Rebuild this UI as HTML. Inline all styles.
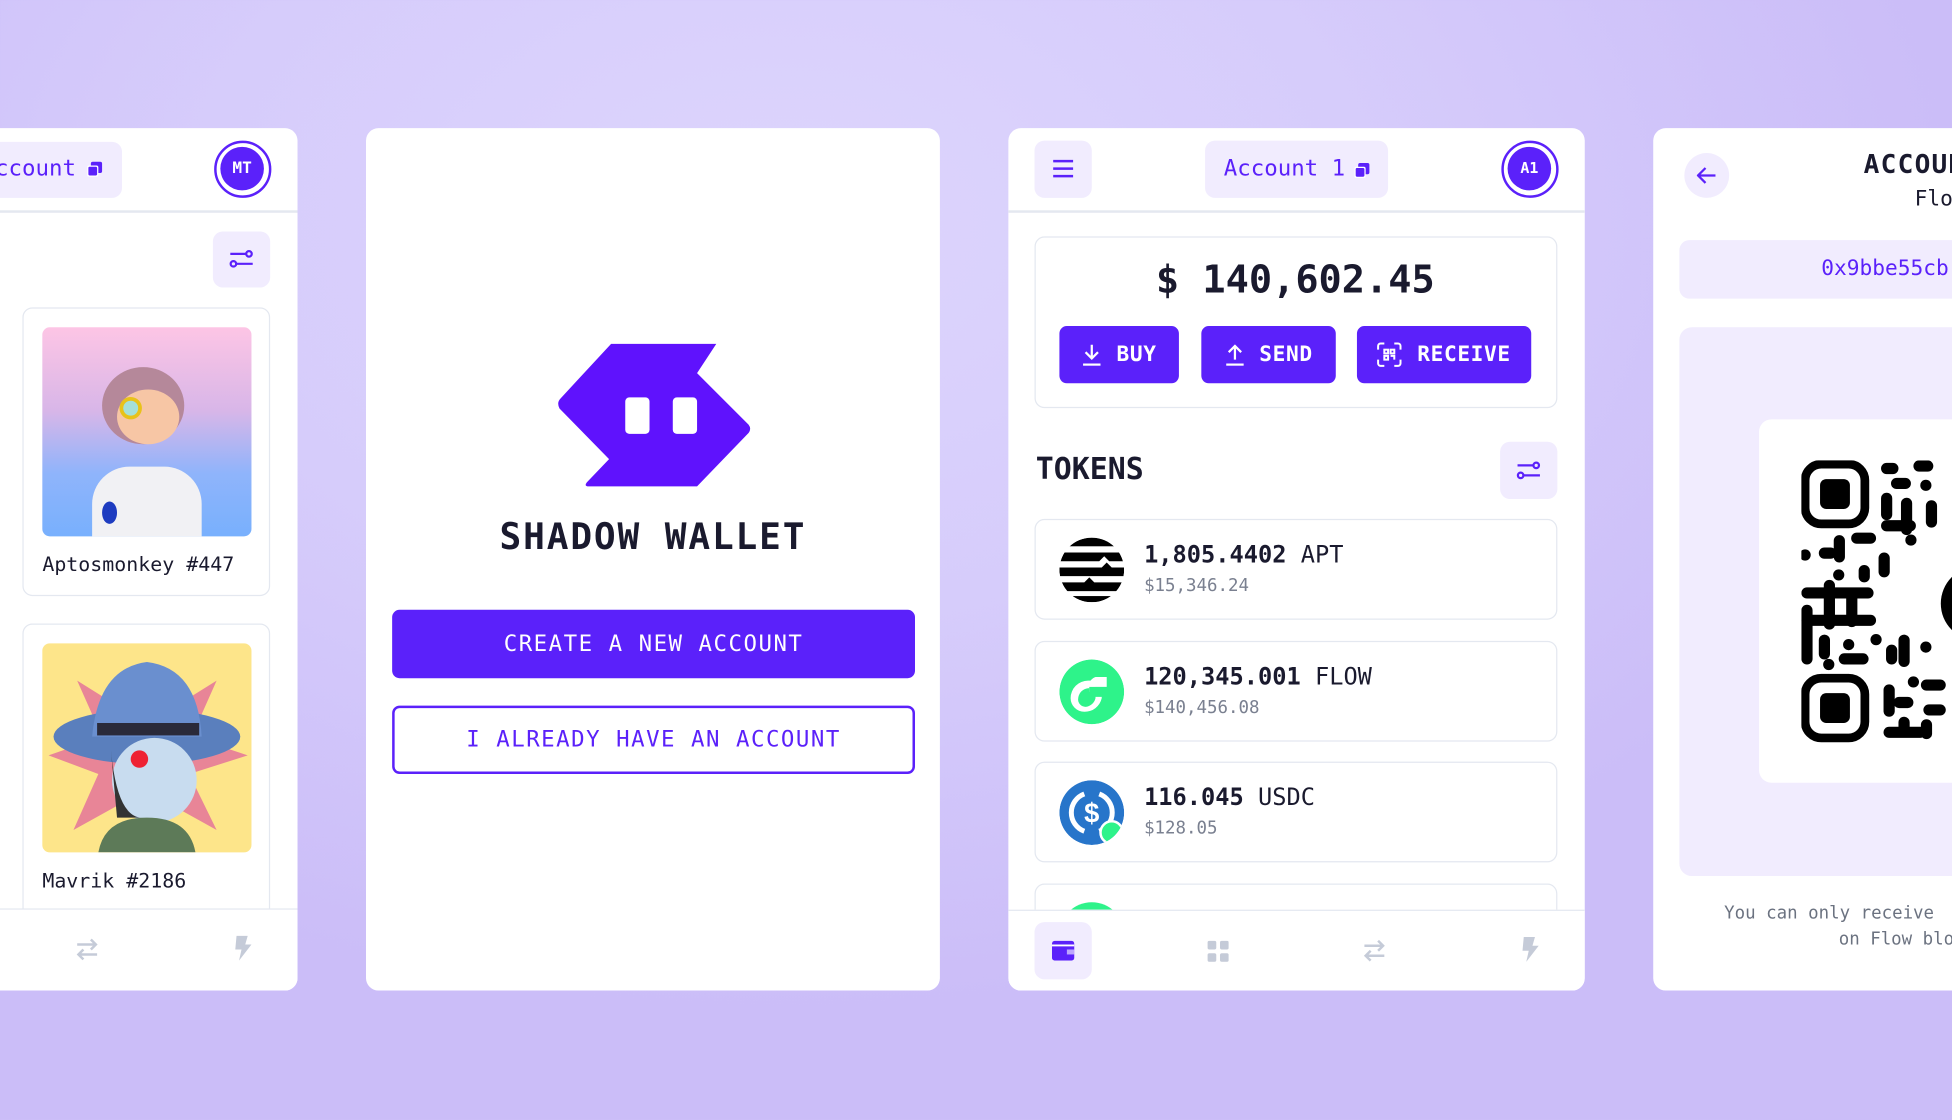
<!DOCTYPE html>
<html><head><meta charset="utf-8"><style>
*{box-sizing:border-box;margin:0;padding:0}
html,body{width:1952px;height:1120px;overflow:hidden}
body{background:radial-gradient(ellipse 60% 70% at 40% 20%,#ddd5fd 0%,#d6ccfb 50%,#cbbdf8 100%);font-family:"DejaVu Sans Mono","Liberation Mono",monospace}
#w{position:absolute;left:0;top:0;width:1568px;height:900px;transform:scale(1.2449,1.2444);transform-origin:0 0}
.ab{position:absolute}
.panel{position:absolute;background:#fff;border-radius:10px;overflow:hidden}
.pill{position:absolute;background:#f1ecfe;border-radius:8px}
.pur{color:#5b21fa}
.av{position:absolute;width:46px;height:46px;border-radius:50%;border:2.5px solid #5b21fa;background:#fff}
.av div{position:absolute;left:3px;top:3px;width:35px;height:35px;border-radius:50%;background:#5b21fa;color:#fff;font-size:13px;font-weight:bold;text-align:center;line-height:35px}
.hl{position:absolute;left:0;right:0;height:1.5px;background:#e4e8f0}
.card{position:absolute;border:1.5px solid #e4e8f0;border-radius:8px;background:#fff}
.btn{position:absolute;background:#5b21fa;border-radius:6px;color:#fff;font-weight:bold;font-size:17px;letter-spacing:0.5px;display:flex;align-items:center;justify-content:center;gap:12px}
.tok .a{position:absolute;left:87px;top:17px;font-size:19px;color:#1a1a2e}
.tok .u{position:absolute;left:87px;top:45px;font-size:14px;color:#7a8090}
.ic{position:absolute;left:19px;top:14px;width:52px;height:52px;border-radius:50%}
</style></head><body><div id="w">

<!-- Panel 1 -->
<div class="panel" style="left:-20px;top:103px;width:259px;height:693px">
 <div class="pill" style="left:0;top:11px;width:118px;height:45px"><span class="pur ab" style="left:16px;top:11px;font-size:18px">ccount</span>
 <svg class="ab" style="left:89px;top:15px" width="14" height="14" viewBox="0 0 14 14"><rect x="4" y="1" width="9" height="9" rx="1.5" fill="#5b21fa"/><rect x="1" y="4" width="9" height="9" rx="1.5" fill="#fff"/><rect x="2" y="5" width="7" height="7" rx="1" fill="#5b21fa"/></svg></div>
 <div class="av" style="left:192px;top:10px"><div>MT</div></div>
 <div class="hl" style="top:66px"></div>
 <div class="pill" style="left:191px;top:83px;width:46px;height:45px"><svg class="ab" style="left:13px;top:14px" width="20" height="16" viewBox="0 0 20 16" fill="none" stroke="#5b21fa" stroke-width="1.8"><path d="M1 4h13M6 12h13"/><circle cx="16" cy="4" r="2.2"/><circle cx="3.5" cy="12" r="2.2"/></svg></div>
 <div class="card" style="left:38px;top:144px;width:199px;height:232px">
  <div class="ab" style="left:15px;top:15px;width:168px;height:168px;border-radius:6px;overflow:hidden;background:linear-gradient(#fdc5e5,#d8b6e8 40%,#8fb4fb 70%,#78b0fd)">
   <div class="ab" style="left:48px;top:32px;width:66px;height:62px;border-radius:50%;background:#b5889a"></div>
   <div class="ab" style="left:60px;top:50px;width:50px;height:44px;border-radius:50%;background:#f7c6a5"></div>
   <div class="ab" style="left:62px;top:56px;width:18px;height:18px;border-radius:50%;border:3px solid #e8c21a;background:#a5e0d8"></div>
   <div class="ab" style="left:40px;top:112px;width:88px;height:70px;border-radius:30px 30px 0 0;background:#f1f1f4"></div>
   <div class="ab" style="left:48px;top:140px;width:12px;height:18px;border-radius:50%;background:#1e3cc0"></div>
  </div>
  <div class="ab" style="left:15px;top:196px;font-size:16px;color:#1a1a2e">Aptosmonkey #447</div>
 </div>
 <div class="card" style="left:38px;top:398px;width:199px;height:240px">
  <div class="ab" style="left:15px;top:15px;width:168px;height:168px;border-radius:6px;overflow:hidden;background:#fde58a">
   <svg class="ab" style="left:0;top:0" width="168" height="168" viewBox="0 0 168 168"><polygon points="84,20 100,55 140,30 120,75 165,90 118,105 140,150 95,125 84,168 70,125 25,150 45,105 5,90 48,75 28,30 68,55" fill="#e88597"/><ellipse cx="84" cy="75" rx="75" ry="22" fill="#5a7fbd"/><path d="M40 75 Q45 20 84 15 Q125 20 128 75Z" fill="#6a8fcf"/><rect x="44" y="64" width="82" height="10" fill="#2a2a3a"/><ellipse cx="90" cy="110" rx="34" ry="34" fill="#c8dcef"/><path d="M55 85 Q60 140 80 140 L60 140Z" fill="#333"/><circle cx="78" cy="93" r="7" fill="#e23"/><path d="M45 168 Q50 140 84 140 Q118 140 123 168Z" fill="#5d7a58"/></svg>
  </div>
  <div class="ab" style="left:15px;top:196px;font-size:16px;color:#1a1a2e">Mavrik #2186</div>
 </div>
 <div class="hl" style="top:627px"></div>
 <div class="ab" style="left:0;top:628px;width:259px;height:65px;background:#fff"></div>
 <svg class="ab" style="left:80px;top:651px" width="20" height="18" viewBox="0 0 20 18" fill="none" stroke="#c5cbd8" stroke-width="2"><path d="M2 5h15M13 1l4 4-4 4M18 13H3M7 9l-4 4 4 4"/></svg>
 <svg class="ab" style="left:207px;top:649px" width="16" height="20" viewBox="0 0 16 20"><path d="M3 0h9l-2 7h5L5 20l2-9H2z" fill="#c5cbd8"/></svg>
</div>

<!-- Panel 2 -->
<div class="panel" style="left:294px;top:103px;width:461px;height:693px">
 <svg class="ab" style="left:153px;top:173px" width="156" height="116" viewBox="18 14 192 142"><path d="M72 14H176L157 43L208 94Q211 98 208 102L157 155H50Q45 155 48 151L70 128L21 78Q18 72 22 68Z" fill="#5f12fd"/><rect x="86" y="67" width="24" height="36" rx="4" fill="#fff"/><rect x="133" y="67" width="24" height="36" rx="4" fill="#fff"/></svg>
 <div class="ab" style="left:0;width:461px;top:311px;text-align:center;font-size:29px;font-weight:bold;letter-spacing:1.5px;color:#1a1a2e">SHADOW WALLET</div>
 <div class="btn" style="left:21px;top:387px;width:420px;height:55px;letter-spacing:1.2px;font-size:18px;font-weight:normal">CREATE A NEW ACCOUNT</div>
 <div class="ab pur" style="left:21px;top:464px;width:420px;height:55px;border:2px solid #5b21fa;border-radius:6px;display:flex;align-items:center;justify-content:center;font-size:18px;letter-spacing:1.2px">I ALREADY HAVE AN ACCOUNT</div>
</div>

<!-- Panel 3 -->
<div class="panel" style="left:810px;top:103px;width:463px;height:693px">
 <div class="pill" style="left:21px;top:10px;width:46px;height:46px"><svg class="ab" style="left:14px;top:15px" width="18" height="15" viewBox="0 0 18 15" stroke="#5b21fa" stroke-width="2"><path d="M1 1.5h16M1 7.5h16M1 13.5h16"/></svg></div>
 <div class="pill" style="left:158px;top:10px;width:147px;height:46px"><span class="pur ab" style="left:15px;top:12px;font-size:18px">Account 1</span>
 <svg class="ab" style="left:119px;top:17px" width="14" height="14" viewBox="0 0 14 14"><rect x="4" y="1" width="9" height="9" rx="1.5" fill="#5b21fa"/><rect x="1" y="4" width="9" height="9" rx="1.5" fill="#fff"/><rect x="2" y="5" width="7" height="7" rx="1" fill="#5b21fa"/></svg></div>
 <div class="av" style="left:396px;top:10px"><div style="font-size:12px">A1</div></div>
 <div class="hl" style="top:66px"></div>
 <div class="card" style="left:21px;top:87px;width:420px;height:138px">
  <div class="ab" style="left:0;width:417px;top:16px;text-align:center;font-size:31px;font-weight:bold;color:#1a1a2e;letter-spacing:0">$ 140,602.45</div>
  <div class="btn" style="left:19px;top:71px;width:96px;height:46px"><svg width="16" height="18" viewBox="0 0 16 18" fill="none" stroke="#fff" stroke-width="1.8"><path d="M8 1v11M3 7l5 5 5-5M1 17h14"/></svg>BUY</div>
  <div class="btn" style="left:133px;top:71px;width:108px;height:46px"><svg width="16" height="18" viewBox="0 0 16 18" fill="none" stroke="#fff" stroke-width="1.8"><path d="M8 13V2M3 7l5-5 5 5M1 17h14"/></svg>SEND</div>
  <div class="btn" style="left:258px;top:71px;width:140px;height:46px"><svg width="20" height="20" viewBox="0 0 20 20" fill="none" stroke="#fff" stroke-width="1.6"><path d="M1 6V3a2 2 0 012-2h3M14 1h3a2 2 0 012 2v3M19 14v3a2 2 0 01-2 2h-3M6 19H3a2 2 0 01-2-2v-3"/><rect x="6" y="6" width="3" height="3"/><rect x="11" y="6" width="3" height="3"/><rect x="6" y="11" width="3" height="3"/><path d="M11 11h3v3"/></svg>RECEIVE</div>
 </div>
 <div class="ab" style="left:22px;top:260px;font-size:24px;font-weight:bold;color:#1a1a2e;letter-spacing:0">TOKENS</div>
 <div class="pill" style="left:395px;top:252px;width:46px;height:46px"><svg class="ab" style="left:13px;top:15px" width="20" height="16" viewBox="0 0 20 16" fill="none" stroke="#5b21fa" stroke-width="1.8"><path d="M1 4h13M6 12h13"/><circle cx="16" cy="4" r="2.2"/><circle cx="3.5" cy="12" r="2.2"/></svg></div>
 <div class="card tok" style="left:21px;top:314px;width:420px;height:81px">
  <svg class="ic" viewBox="0 0 52 52"><defs><clipPath id="c1"><circle cx="26" cy="26" r="26"/></clipPath></defs><g clip-path="url(#c1)" fill="#000"><rect x="0" y="0" width="52" height="7"/><path d="M0 12h52v7H40l-4-4-4 4H0z"/><path d="M0 24h34l4-4 4 4h10v7H0z"/><path d="M0 36h20l4-4 4 4h24v7H0z"/><rect x="0" y="47" width="52" height="5"/></g></svg>
  <div class="a"><b>1,805.4402</b> APT</div><div class="u">$15,346.24</div></div>
 <div class="card tok" style="left:21px;top:412px;width:420px;height:81px">
  <svg class="ic" viewBox="0 0 52 52"><circle cx="26" cy="26" r="26" fill="#2ef38a"/><path d="M29 14h9v8h-9v4h-5v-3a9 9 0 00-9 9 6 6 0 006 6 9 9 0 008-7v-1h5v1a14 14 0 01-14 11 11 11 0 01-11-11 14 14 0 0114-14h2a8 8 0 014-3z" fill="#fff"/><rect x="24" y="22" width="5" height="7" fill="#2ef38a"/><circle cx="21" cy="32" r="2.5" fill="#2ef38a"/></svg>
  <div class="a"><b>120,345.001</b> FLOW</div><div class="u">$140,456.08</div></div>
 <div class="card tok" style="left:21px;top:509px;width:420px;height:81px">
  <svg class="ic" viewBox="0 0 52 52"><circle cx="26" cy="26" r="26" fill="#2775ca"/><path d="M20 11a16 16 0 000 30M32 11a16 16 0 010 30" stroke="#fff" stroke-width="4" fill="none"/><text x="26" y="34" text-anchor="middle" font-size="22" font-weight="bold" fill="#fff" font-family="Liberation Sans">$</text><circle cx="42" cy="42" r="9" fill="#2ef38a" stroke="#fff" stroke-width="2"/></svg>
  <div class="a"><b>116.045</b> USDC</div><div class="u">$128.05</div></div>
 <div class="card" style="left:21px;top:607px;width:420px;height:81px"><div class="ab" style="left:19px;top:14px;width:52px;height:52px;border-radius:50%;background:#2ef38a"></div></div>
 <div class="ab" style="left:0;top:628px;width:463px;height:65px;background:#fff;border-top:1.5px solid #e4e8f0"></div>
 <div class="pill" style="left:21px;top:638px;width:46px;height:46px"><svg class="ab" style="left:14px;top:15px" width="18" height="16" viewBox="0 0 18 16"><rect x="0" y="0" width="18" height="16" rx="2.5" fill="#5b21fa"/><rect x="0" y="3" width="18" height="1.5" fill="#fff"/><rect x="12" y="7" width="6" height="4" fill="#fff" opacity=".6"/></svg></div>
 <svg class="ab" style="left:160px;top:653px" width="17" height="17" viewBox="0 0 17 17" fill="#c5cbd8"><rect x="0" y="0" width="7" height="7" rx="1.5"/><rect x="10" y="0" width="7" height="7" rx="1.5"/><rect x="0" y="10" width="7" height="7" rx="1.5"/><rect x="10" y="10" width="7" height="7" rx="1.5"/></svg>
 <svg class="ab" style="left:284px;top:652px" width="20" height="18" viewBox="0 0 20 18" fill="none" stroke="#c5cbd8" stroke-width="2"><path d="M2 5h15M13 1l4 4-4 4M18 13H3M7 9l-4 4 4 4"/></svg>
 <svg class="ab" style="left:411px;top:650px" width="16" height="20" viewBox="0 0 16 20"><path d="M3 0h9l-2 7h5L5 20l2-9H2z" fill="#c5cbd8"/></svg>
</div>

<!-- Panel 4 -->
<div class="panel" style="left:1328px;top:103px;width:280px;height:693px">
 <div class="ab" style="left:25px;top:20px;width:36px;height:36px;border-radius:50%;background:#f1ecfe"><svg class="ab" style="left:10px;top:11px" width="16" height="14" viewBox="0 0 16 14" fill="none" stroke="#5b21fa" stroke-width="1.8"><path d="M15 7H2M7 1L1 7l6 6"/></svg></div>
 <div class="ab" style="left:169px;top:17px;font-size:21px;font-weight:bold;color:#1a1a2e;letter-spacing:1px">ACCOUNT</div>
 <div class="ab" style="left:210px;top:47px;font-size:17px;color:#1a1a2e">Flow</div>
 <div class="pill" style="left:21px;top:90px;width:300px;height:47px"><span class="pur ab" style="left:114px;top:13px;font-size:17px">0x9bbe55cb</span></div>
 <div class="ab" style="left:21px;top:160px;width:300px;height:441px;background:#f1ecfe;border-radius:10px">
  <div class="ab" style="left:64px;top:74px;width:260px;height:292px;background:#fff;border-radius:10px">
   <svg class="ab" style="left:34px;top:33px" width="200" height="228" viewBox="0 0 200 228" fill="#000">
    <rect x="3" y="3" width="48" height="48" rx="13" fill="none" stroke="#000" stroke-width="7"/><rect x="15" y="15" width="24" height="24" rx="5"/>
    <rect x="3" y="175" width="48" height="48" rx="13" fill="none" stroke="#000" stroke-width="7"/><rect x="15" y="187" width="24" height="24" rx="5"/>
    <g>
     <rect x="64" y="2" width="14" height="9" rx="4.5"/><rect x="90" y="0" width="16" height="9" rx="4.5"/><rect x="72" y="14" width="16" height="9" rx="4.5"/><circle cx="100" cy="20" r="4.5"/>
     <rect x="64" y="26" width="9" height="22" rx="4.5"/><rect x="80" y="30" width="9" height="30" rx="4.5"/><rect x="64" y="48" width="28" height="9" rx="4.5"/><rect x="100" y="32" width="9" height="22" rx="4.5"/><circle cx="88" cy="64" r="4.5"/>
     <rect x="26" y="60" width="9" height="22" rx="4.5"/><rect x="40" y="58" width="20" height="9" rx="4.5"/><rect x="62" y="74" width="9" height="20" rx="4.5"/><circle cx="3" cy="76" r="4.5"/><rect x="14" y="70" width="14" height="9" rx="4.5"/><circle cx="30" cy="92" r="4.5"/><rect x="46" y="84" width="9" height="14" rx="4.5"/>
     <rect x="0" y="102" width="58" height="9" rx="4.5"/><rect x="18" y="96" width="9" height="40" rx="4.5"/><rect x="36" y="104" width="9" height="30" rx="4.5"/><rect x="0" y="116" width="9" height="48" rx="4.5"/><rect x="0" y="124" width="60" height="9" rx="4.5"/>
     <rect x="14" y="140" width="9" height="20" rx="4.5"/><circle cx="38" cy="148" r="4.5"/><rect x="30" y="155" width="24" height="9" rx="4.5"/><circle cx="60" cy="144" r="4.5"/><rect x="68" y="148" width="9" height="16" rx="4.5"/><circle cx="22" cy="164" r="4.5"/>
     <rect x="78" y="140" width="9" height="26" rx="4.5"/><circle cx="100" cy="150" r="4.5"/>
     <rect x="66" y="180" width="9" height="26" rx="4.5"/><rect x="74" y="190" width="16" height="9" rx="4.5"/><circle cx="90" cy="178" r="4.5"/><rect x="96" y="176" width="20" height="9" rx="4.5"/><rect x="98" y="196" width="18" height="9" rx="4.5"/>
     <rect x="66" y="214" width="34" height="9" rx="4.5"/><rect x="78" y="206" width="9" height="16" rx="4.5"/><rect x="96" y="208" width="9" height="16" rx="4.5"/>
     <circle cx="142" cy="115" r="30"/><circle cx="140" cy="117" r="13" fill="#fff"/><rect x="140" y="105" width="9" height="9" fill="#000"/><circle cx="135" cy="120" r="3"/>
    </g>
   </svg>
  </div>
 </div>
 <div class="ab" style="left:57px;top:623px;font-size:14px;color:#6b7280;white-space:nowrap">You can only receive</div>
 <div class="ab" style="left:149px;top:644px;font-size:14px;color:#6b7280;white-space:nowrap">on Flow blockchain</div>
</div>

</div></body></html>
